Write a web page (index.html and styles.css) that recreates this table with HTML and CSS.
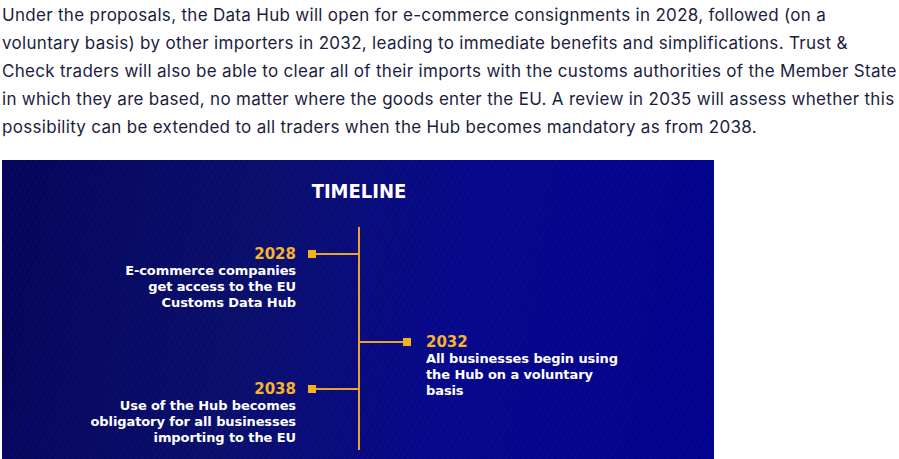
FILE: index.html
```html
<!DOCTYPE html>
<html lang="en">
<head>
<meta charset="utf-8">
<title>Customs Data Hub timeline</title>
<link rel="stylesheet" href="styles.css">
</head>
<body>
<main class="article">
  <p class="lead">Under the proposals, the Data Hub will open for e-commerce consignments in 2028, followed (on a voluntary basis) by other importers in 2032, leading to immediate benefits and simplifications. Trust &amp; Check traders will also be able to clear all of their imports with the customs authorities of the Member State in which they are based, no matter where the goods enter the EU. A review in 2035 will assess whether this possibility can be extended to all traders when the Hub becomes mandatory as from 2038.</p>

  <figure class="timeline-card">
    <h2 class="timeline-title">TIMELINE</h2>
    <div class="timeline">
      <div class="col col-left">
        <div class="entry entry-2028">
          <div class="year-row">
            <span class="year">2028</span>
            <span class="connector"><span class="dot"></span><span class="rule"></span></span>
          </div>
          <p class="desc">E-commerce companies<br>get access to the EU<br>Customs Data Hub</p>
        </div>
        <div class="entry entry-2038">
          <div class="year-row">
            <span class="year">2038</span>
            <span class="connector"><span class="dot"></span><span class="rule"></span></span>
          </div>
          <p class="desc">Use of the Hub becomes<br>obligatory for all businesses<br>importing to the EU</p>
        </div>
      </div>
      <div class="col col-right">
        <div class="entry entry-2032">
          <div class="year-row">
            <span class="connector"><span class="rule"></span><span class="dot"></span></span>
            <span class="year">2032</span>
          </div>
          <p class="desc">All businesses begin using<br>the Hub on a voluntary<br>basis</p>
        </div>
      </div>
    </div>
  </figure>
</main>
</body>
</html>
```

FILE: styles.css
```css
html, body {
  margin: 0;
  padding: 0;
  background: #ffffff;
}

body {
  overflow: hidden;
}

.article {
  padding: 1px 0 0 2px;
  width: 899px;
}

.lead {
  margin: 0;
  font-family: Inter, "Noto Sans", sans-serif;
  font-size: 17px;
  line-height: 28px;
  letter-spacing: 0.3px;
  color: #1b1d40;
}

.timeline-card {
  margin: 19px 0 0 0;
  width: 712px;
  height: 310px;
  overflow: hidden;
  padding-top: 19px;
  box-sizing: border-box;
  background:
    repeating-linear-gradient(120deg, rgba(120, 150, 255, 0.035) 0 1px, transparent 1px 5px),
    linear-gradient(100deg, #05045a 0%, #0a0f6c 35%, #07088a 62%, #02028e 100%);
  font-family: "DejaVu Sans", Verdana, sans-serif;
  color: #ffffff;
}

.timeline-title {
  margin: 0;
  text-align: center;
  font-family: "DejaVu Sans Condensed", "DejaVu Sans", sans-serif;
  font-stretch: condensed;
  font-weight: 700;
  font-size: 20px;
  line-height: 24px;
  color: #ffffff;
  padding-left: 2px;
}

.timeline {
  margin-top: 24px;
  display: grid;
  grid-template-columns: 358px 1fr;
}

.col-left {
  border-right: 2px solid #e6a32e;
  padding: 18px 0 4px 0;
}

.col-right {
  padding-top: 106px;
}

.entry-2038 {
  margin-top: 69px;
}

.year-row {
  display: flex;
  align-items: center;
  height: 18px;
}

.col-left .year-row {
  justify-content: flex-end;
}

.year {
  font-weight: 700;
  font-size: 15px;
  line-height: 18px;
  color: #f7b32b;
}

.connector {
  display: flex;
  align-items: center;
}

.col-left .connector {
  margin-left: 12px;
}

.col-right .connector {
  margin-right: 15px;
}

.dot {
  width: 8px;
  height: 8px;
  background: #f5b01f;
}

.rule {
  height: 2px;
  background: #e6a32e;
}

.col-left .rule {
  width: 42px;
}

.col-right .rule {
  width: 43px;
}

.desc {
  margin: 0;
  font-weight: 700;
  font-size: 13px;
  line-height: 16px;
  letter-spacing: -0.1px;
  color: #ffffff;
}

.col-left .desc {
  text-align: right;
  padding-right: 62px;
}

.col-right .desc {
  padding-left: 66px;
}
```
